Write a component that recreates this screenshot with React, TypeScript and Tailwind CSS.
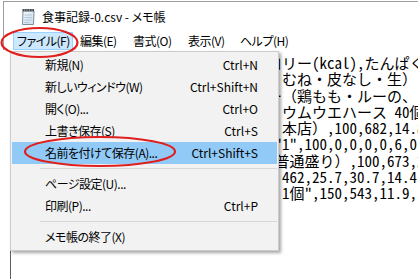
import React from "react";

type MenuEntry = { label: string; keys: string; active?: boolean } | "sep";

const menuEntries: MenuEntry[] = [
  { label: "新規(N)", keys: "Ctrl+N" },
  { label: "新しいウィンドウ(W)", keys: "Ctrl+Shift+N" },
  { label: "開く(O)...", keys: "Ctrl+O" },
  { label: "上書き保存(S)", keys: "Ctrl+S" },
  { label: "名前を付けて保存(A)...", keys: "Ctrl+Shift+S", active: true },
  "sep",
  { label: "ページ設定(U)...", keys: "" },
  { label: "印刷(P)...", keys: "Ctrl+P" },
  "sep",
  { label: "メモ帳の終了(X)", keys: "" },
];

const lines: [string, string][] = [
  ["日付,食事,食品名,数量(g),カ", "ロリー(kcal),たんぱく質(g),脂質(g),炭水化物(g)"],
  ["2021/01/04,朝食,若どり（", "\u3000むね・皮なし・生）"],
  ["2021/01/04,昼食,チキンカレ", "ー（鶏もも・ルーの、ご飯少なめ）,300,450"],
  ["2021/01/04,間食,カルシ", "\u3000ウムウエハース 40個,100,520,7.2,28.1"],
  ["2021/01/05,昼食,ラーメン（", "\u3000本店）,100,682,14.8,32.5,80.2"],
  ["2021/01/05,飲料,お茶", "\u2002\"1\",100,0,0,0,0,6,0"],
  ["2021/01/05,夕食,牛丼（", "\u2002普通盛り）,100,673,20.2,25.0"],
  ["2021/01/06,朝食,トースト,100,", "\u3000462,25.7,30.7,14.4,40.2"],
  ["2021/01/06,間食,\"大福 ", "\u30001個\",150,543,11.9,1.2,110.5"],
];

function NotepadIcon() {
  return (
    <svg width="16" height="18" viewBox="0 0 16 18" className="shrink-0">
      <defs>
        <linearGradient id="pg" x1="0" y1="0" x2="1" y2="1">
          <stop offset="0" stopColor="#f4f8fc" />
          <stop offset="1" stopColor="#c9dcee" />
        </linearGradient>
      </defs>
      <path d="M3 2.5 L14 2.5 L13.5 16.5 L2.5 16.5 Z" fill="url(#pg)" stroke="#7e8c9b" strokeWidth="1" />
      <rect x="2.5" y="1" width="11.5" height="2.5" fill="#4b5058" />
      <path d="M4.5 1v3M7 1v3M9.5 1v3M12 1v3" stroke="#9aa3ad" strokeWidth="0.7" />
      <path d="M4.5 7h7.5M4.5 9.5h7.5M4.3 12h7.5M4.2 14.5h5" stroke="#a9bccf" strokeWidth="0.8" />
    </svg>
  );
}

export default function App() {
  return (
    <div className="relative h-[279px] w-[418px] overflow-hidden bg-white text-black">
      <div className="flex h-full flex-col">
        <div className="ml-[3px] mt-[1px] border-l border-t border-[#9c9c9c] font-['Noto_Sans_CJK_JP','Noto_Sans',sans-serif] text-[12px] [font-feature-settings:'palt']">
          <div className="flex h-[30px] items-center pl-[16px]">
            <NotepadIcon />
            <span className="ml-[6px] whitespace-nowrap">食事記録-0.csv - メモ帳</span>
          </div>
          <div className="flex h-[18px] pl-[9px] whitespace-nowrap tracking-[-0.5px]">
            <div className="flex w-[60px] items-center border border-[#99d1ff] bg-[#cce8ff] pl-[3px]">ファイル(F)</div>
            <div className="flex w-[53px] items-center pl-[7px]">編集(E)</div>
            <div className="flex w-[55px] items-center pl-[7px]">書式(O)</div>
            <div className="flex w-[52px] items-center pl-[7px]">表示(V)</div>
            <div className="flex items-center pl-[7px]">ヘルプ(H)</div>
          </div>
        </div>
        <div className="ml-[10px] mt-[1px] flex-1 border-l border-[#5f5f5f] pt-[4px] font-['Noto_Sans_Mono_CJK_JP','Noto_Sans_CJK_JP',monospace] text-[15px] leading-[16.25px]">
          {lines.map(([p, v], i) => (
            <div key={i} className="flex h-[16.25px] whitespace-nowrap">
              <span className="flex w-[256px] shrink-0 justify-end overflow-hidden">{p}</span>
              <span>{v}</span>
            </div>
          ))}
        </div>
      </div>

      <div className="absolute left-[10px] top-[51px] w-[269px] border border-[#cccccc] bg-[#f2f2f2] px-[1px] py-[2px] font-['Noto_Sans_CJK_JP','Noto_Sans',sans-serif] text-[12px] shadow-[2px_2px_3px_rgba(0,0,0,0.35)] [font-feature-settings:'palt']">
        {menuEntries.map((e, i) =>
          e === "sep" ? (
            <div key={i} className="flex h-[9px] items-center pl-[28px]">
              <div className="h-px flex-1 bg-[#d7d7d7]" />
            </div>
          ) : (
            <div
              key={i}
              className={`flex h-[22px] items-center justify-between whitespace-nowrap pl-[33px] pr-[19px] ${e.active ? "bg-[#91c9f7]" : ""}`}
            >
              <span className="tracking-[-0.5px]">{e.label}</span>
              <span>{e.keys}</span>
            </div>
          )
        )}
      </div>

      <svg className="pointer-events-none absolute left-0 top-0" width="418" height="279" viewBox="0 0 418 279">
        <ellipse cx="39.5" cy="42.5" rx="38" ry="14.5" fill="none" stroke="#e0201e" strokeWidth="2.2" />
        <ellipse cx="100" cy="151.5" rx="75" ry="14.5" fill="none" stroke="#e0201e" strokeWidth="2.2" />
      </svg>
    </div>
  );
}
